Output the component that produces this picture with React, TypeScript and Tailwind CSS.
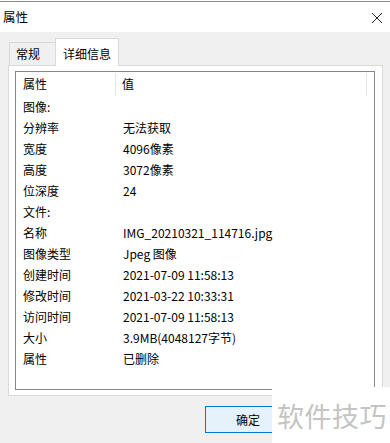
import React from 'react';

const rows: [string, string][] = [
  ['图像:', ''],
  ['分辨率', '无法获取'],
  ['宽度', '4096像素'],
  ['高度', '3072像素'],
  ['位深度', '24'],
  ['文件:', ''],
  ['名称', 'IMG_20210321_114716.jpg'],
  ['图像类型', 'Jpeg 图像'],
  ['创建时间', '2021-07-09 11:58:13'],
  ['修改时间', '2021-03-22 10:33:31'],
  ['访问时间', '2021-07-09 11:58:13'],
  ['大小', '3.9MB(4048127字节)'],
  ['属性', '已删除'],
];

export default function App() {
  return (
    <div
      className="relative w-[390px] h-[443px] overflow-hidden bg-[#f0f0f0] text-[12px] text-black"
      style={{ fontFamily: '"Noto Sans CJK SC", "Noto Sans", sans-serif' }}
    >
      {/* title bar */}
      <div className="h-px bg-white" />
      <div className="h-px bg-[#8c8c8c]" />
      <div className="h-[30px] bg-white flex items-center justify-between pl-[3px] pr-[7px]">
        <span className="text-[12.5px]">属性</span>
        <svg width="12" height="12" viewBox="0 0 12 12" className="mt-px">
          <path d="M1 1 L11 11 M11 1 L1 11" stroke="#222" strokeWidth="1" fill="none" />
        </svg>
      </div>

      {/* tabs */}
      <div className="pl-[8px] pt-[6px]">
        <div className="flex items-end h-[27px] relative z-10">
          <div className="ml-px h-[23px] w-[47px] border border-b-0 border-[#d9d9d9] bg-[#f0f0f0] pl-[6px] flex items-center">
            常规
          </div>
          <div className="-ml-px h-[28px] w-[64px] -mb-px border border-b-0 border-[#d9d9d9] bg-white pl-[7px] pt-[3px] flex items-center">
            详细信息
          </div>
        </div>

        {/* tab panel */}
        <div className="w-[375px] h-[331px] border border-[#d9d9d9] bg-white pl-[6px] pr-[7px] pt-[5px]">
          <div className="w-[360px] h-[319px] border border-[#828790]">
            <div className="flex h-[24px] items-center">
              <div className="w-[100px] h-[23px] pl-[7px] flex items-center border-r border-[#e5e5e5]">属性</div>
              <div className="w-[251px] h-[23px] pl-[6px] flex items-center border-r border-[#e5e5e5]">值</div>
            </div>
            {rows.map(([k, v], i) => (
              <div key={i} className="flex h-[21px] items-center">
                <div className="w-[100px] pl-[7px]">{k}</div>
                <div className="pl-[7px]">{v}</div>
              </div>
            ))}
          </div>
        </div>

        {/* buttons */}
        <div className="pt-[10px] pl-[197px]">
          <div className="w-[86px] h-[27px] border border-[#0078d7] bg-[#e5f1fb] flex items-center justify-center">
            确定
          </div>
        </div>
      </div>

      {/* watermark */}
      <div className="absolute left-[272px] top-[387px] right-0 bottom-0 bg-white flex items-center pl-[5px]">
        <span className="text-[27px] leading-none text-[#c4c4c4] tracking-[0.5px]">软件技巧</span>
      </div>
    </div>
  );
}
